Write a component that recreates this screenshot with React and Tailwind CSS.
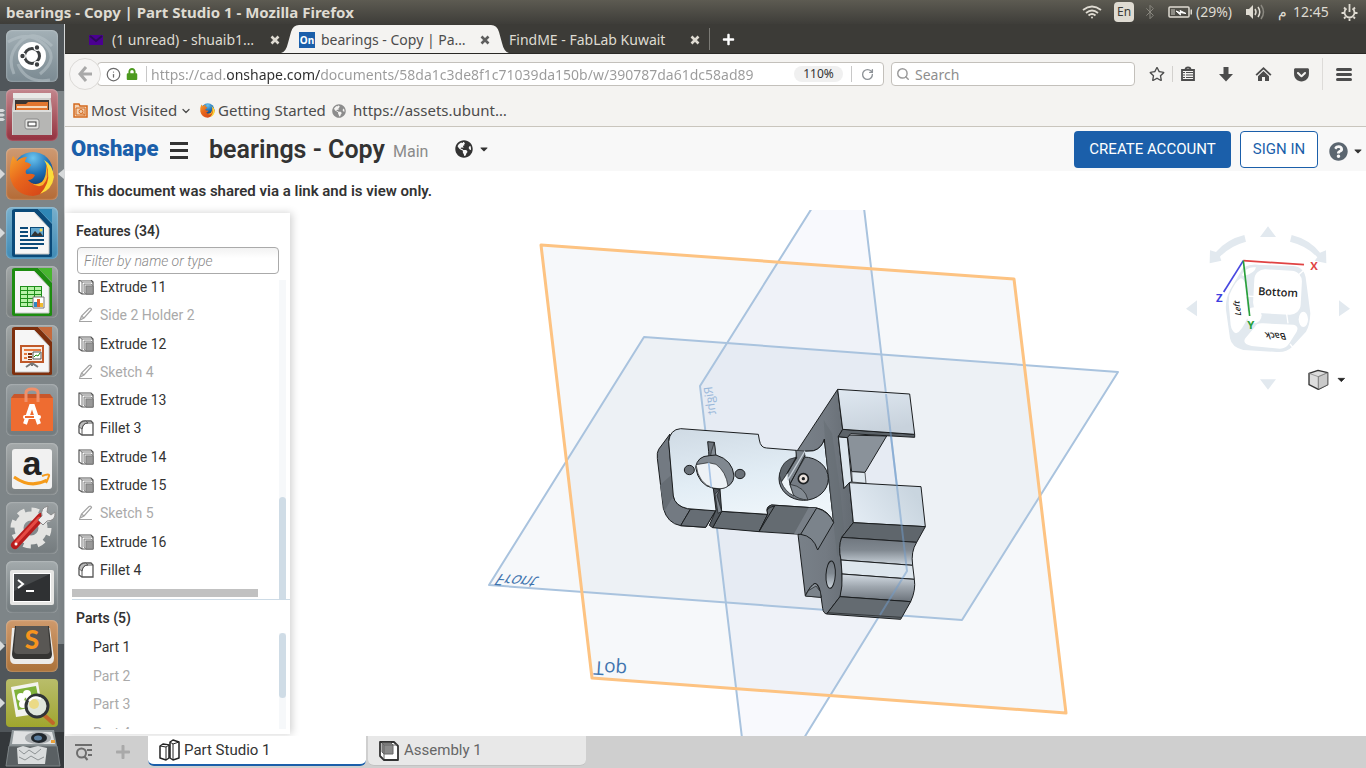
import React from "react";
import {
  FaGlobeAmericas,
  FaQuestionCircle,
  FaCaretDown,
  FaLock,
  FaRegStar,
  FaGetPocket,
  FaPlus,
} from "react-icons/fa";
import { Bluetooth, ChevronDown, Search, Info, RotateCw } from "lucide-react";

const features = [
  { name: "Extrude 11", type: "extrude" },
  { name: "Side 2 Holder 2", type: "sketch" },
  { name: "Extrude 12", type: "extrude" },
  { name: "Sketch 4", type: "sketch" },
  { name: "Extrude 13", type: "extrude" },
  { name: "Fillet 3", type: "fillet" },
  { name: "Extrude 14", type: "extrude" },
  { name: "Extrude 15", type: "extrude" },
  { name: "Sketch 5", type: "sketch" },
  { name: "Extrude 16", type: "extrude" },
  { name: "Fillet 4", type: "fillet" },
];

const parts = [
  { name: "Part 1", visible: true },
  { name: "Part 2", visible: false },
  { name: "Part 3", visible: false },
  { name: "Part 4", visible: false },
];

/* ---------- Top panel ---------- */

const TopPanel = () => (
  <header className="h-6 shrink-0 flex items-center justify-between pl-[6px] pr-2 bg-linear-to-b from-[#5d5b52] to-[#3e3d39] text-[#dfdbd2]">
    <h1 className="text-[15px] leading-6 font-bold font-['Noto_Sans',sans-serif] whitespace-nowrap">
      bearings - Copy | Part Studio 1 - Mozilla Firefox
    </h1>
    <div className="flex items-center text-sm font-['Noto_Sans',sans-serif]">
      <svg width="20" height="14" viewBox="0 0 20 14" fill="none" stroke="#dfdbd2" strokeWidth="1.8">
        <path d="M1 5Q10 -2 19 5" />
        <path d="M4 8Q10 3 16 8" />
        <path d="M6.500 10.500Q10 7.500 13.500 10.500" />
        <circle cx="10" cy="12.500" r="1" fill="#dfdbd2" stroke="none" />
      </svg>
      <span className="ml-3 w-5 h-5 rounded-sm bg-[#dfdbd2] text-[#3c3b37] text-xs leading-5 text-center">En</span>
      <Bluetooth size={16} strokeWidth={1.5} className="ml-2 text-[#8a8880]" />
      <svg className="ml-[10px]" width="25" height="12" viewBox="0 0 25 12">
        <rect x="1" y="1" width="20" height="10" rx="1" fill="none" stroke="#dfdbd2" strokeWidth="1.500" />
        <rect x="3" y="3" width="4" height="6" fill="#8d8b84" />
        <path d="M22.500 3.500h1.500v5h-1.500z" fill="#dfdbd2" />
        <path d="M8 5L13 7L12 4.500L18 7.500L12 6.500L12.500 9Z" fill="#fff" stroke="#fff" />
      </svg>
      <span className="ml-[3px] w-[39px]">(29%)</span>
      <svg className="ml-[11px]" width="20" height="16" viewBox="0 0 20 16">
        <path d="M0 5h3l4-4v14l-4-4H0z" fill="#dfdbd2" />
        <g fill="none" stroke="#dfdbd2" strokeWidth="1.500">
          <path d="M9 5q2 3 0 6" />
          <path d="M12 3q3.500 5 0 10" />
          <path d="M15 1q5 7 0 14" stroke="#8a8880" />
        </g>
      </svg>
      <span className="ml-3">م</span>
      <time className="ml-[6px] w-9">12:45</time>
      <svg className="ml-3" width="17" height="17" viewBox="0 0 17 17" fill="none" stroke="#dfdbd2" strokeWidth="1.800">
        <path d="M5.500 4.500a5 5 0 1 0 6 0" />
        <path d="M8.500 0v8" />
        <path d="M3 3.500l1.500 1.500M14 3.500L12.500 5M0.500 9H3M14 9h2.500M3 14.500l1.500-1.500M14 14.500L12.500 13M8.500 14.500V17" />
      </svg>
    </div>
  </header>
);

/* ---------- Launcher ---------- */

const PageSheet = ({ color, dark, children }) => (
  <svg width="52" height="52" viewBox="0 0 52 52">
    <path d="M9 2h23l14 15v32q0 1-2 1H8q-2 0-2-2V4q0-2 3-2z" fill={dark} />
    <path d="M32 2h14v14z" fill={color} />
    <path d="M9 5h19l15 16v26H9z" fill="#f6f6f6" />
    <path d="M28 5l15 16v26H9" fill="none" stroke="#c9c9c9" />
    {children}
  </svg>
);

const DashIcon = () => (
  <svg width="52" height="52" viewBox="0 0 52 52">
    <g fill="none" stroke="#b9c4c9" strokeWidth="3" opacity=".55">
      <path d="M2 12Q22 0 38 14T34 44" />
      <path d="M8 44Q0 26 14 12T46 16" />
      <path d="M44 50Q20 54 12 34" />
    </g>
    <circle cx="26" cy="26" r="14" fill="#fff" />
    <circle cx="26" cy="26" r="7.500" fill="none" stroke="#3c3f41" strokeWidth="3" />
    <g fill="#3c3f41" stroke="#fff" strokeWidth="1.200">
      <circle cx="16.500" cy="26" r="2.800" />
      <circle cx="31" cy="17.500" r="2.800" />
      <circle cx="31" cy="34.500" r="2.800" />
    </g>
  </svg>
);

const FilesIcon = () => (
  <svg width="52" height="52" viewBox="0 0 52 52">
    <path d="M8 4h36l2 16v26H6V20z" fill="#cfcfcd" />
    <path d="M7 4h38v5H7z" fill="#e9e9e7" />
    <path d="M9 11h34v11H9z" fill="#3d3633" />
    <path d="M10 15h10l2-2h20v9H10z" fill="#e2762f" />
    <path d="M11 17h30v2H11z" fill="#f5d9bd" />
    <path d="M7 21h38v25H7z" fill="#b6b6b4" />
    <path d="M7 21h38v2H7z" fill="#dddddb" />
    <rect x="19" y="30" width="14" height="10" rx="2" fill="#e4e4e2" stroke="#888" />
    <rect x="22" y="33" width="8" height="4" fill="#fff" stroke="#333" />
  </svg>
);

const FirefoxIcon = ({ size = 52 }) => (
  <svg width={size} height={size} viewBox="0 0 52 52">
    <defs>
      <radialGradient id="ffGlobe" cx="50%" cy="15%" r="80%">
        <stop offset="0" stopColor="#6bc4ee" />
        <stop offset=".5" stopColor="#1f70b5" />
        <stop offset="1" stopColor="#0d2c5e" />
      </radialGradient>
      <linearGradient id="ffFox" x1="0" y1="0" x2="1" y2="1">
        <stop offset="0" stopColor="#f7a32a" />
        <stop offset=".4" stopColor="#e8651c" />
        <stop offset="1" stopColor="#cf3d17" />
      </linearGradient>
    </defs>
    <circle cx="27" cy="24" r="20" fill="url(#ffGlobe)" />
    <path
      d="M7 8Q9 10 11 13Q15 9 21 9Q19 12 19 14Q24 15 25 17Q24 20 20 22Q19 25 21 26Q26 25 29 27Q27 32 22 32Q28 39 36 34Q42 28 40 17Q46 22 48 26Q46 45 27 48Q8 47 4 29Q3 17 7 8Z"
      fill="url(#ffFox)"
    />
    <path d="M38 12Q47 17 48 29Q46 42 34 46Q44 35 42 25Q42 18 38 12Z" fill="#fbdc3b" />
    <path d="M40 17Q41 28 36 34Q30 38 25 35Q32 40 37 37Q44 30 40 17Z" fill="#f8b62c" />
  </svg>
);

const WriterIcon = () => (
  <PageSheet color="#2f86b5" dark="#0b4a79">
    <g fill="#0b4a79">
      <path d="M14 20h8v2h-8zM14 24h8v2h-8zM14 28h8v2h-8zM14 32h24v2H14zM14 36h24v2H14zM14 40h18v2H14z" />
      <path d="M24 20h14v10H24z" />
    </g>
    <path d="M25 21h12v8H25z" fill="#63a8d0" />
    <path d="M25 29l4-5 3 3 2-2 3 4z" fill="#333" />
    <circle cx="35" cy="23" r="1.500" fill="#f3d44d" />
  </PageSheet>
);

const CalcIcon = () => (
  <PageSheet color="#47b52f" dark="#1d8c10">
    <path d="M14 20h22v21H14z" fill="#1f8f1b" />
    <g fill="#b7f2a8">
      <path d="M15 21h6v3h-6zM22 21h6v3h-6zM29 21h6v3h-6zM15 25h6v3h-6zM22 25h6v3h-6zM29 25h6v3h-6zM15 29h6v3h-6zM22 29h6v3h-6zM29 29h6v3h-6zM15 33h6v3h-6zM22 33h6v3h-6zM15 37h6v3h-6zM22 37h6v3h-6z" />
    </g>
    <path d="M27 31h11v11H27z" fill="#fff" stroke="#777" />
    <path d="M28 36h3v5h-3z" fill="#2f86c5" />
    <path d="M31 33h3v8h-3z" fill="#e4632a" />
    <path d="M34 37h3v4h-3z" fill="#f0bd32" />
  </PageSheet>
);

const ImpressIcon = () => (
  <PageSheet color="#c56a3c" dark="#7e2f0d">
    <path d="M15 21h22v16H15z" fill="#f9ede5" stroke="#c0592a" strokeWidth="2" />
    <path d="M18 24h17v2H18z" fill="#e77a3d" />
    <path d="M18 28h3v2h-3zM18 32h3v2h-3z" fill="#e77a3d" />
    <path d="M22 28h4v2h-4zM22 31h4v2h-4zM22 34h4v1h-4z" fill="#7e2f0d" />
    <path d="M27 27h8v7h-8z" fill="#fff" stroke="#555" />
    <path d="M28 32l2-2 2 1 2-3" fill="none" stroke="#1d8c10" />
    <path d="M26 38l-6 4M26 38l6 4M26 38v3" stroke="#777" strokeWidth="2" />
  </PageSheet>
);

const SoftwareIcon = () => (
  <svg width="52" height="52" viewBox="0 0 52 52">
    <path d="M5 14h42v33H5z" fill="#ee6c31" />
    <path d="M8 10h36l3 4H5z" fill="#c9562a" />
    <path d="M20 18V9q0-4 6-4t6 4v9" fill="none" stroke="#f0906a" strokeWidth="3" />
    <g stroke="#fff" strokeWidth="4" fill="none">
      <path d="M19 40L25 22h2l6 18" />
    </g>
    <rect x="17" y="31" width="18" height="4" rx="2" fill="#fff" />
    <path d="M19 33h9" stroke="#ee6c31" strokeWidth="2" />
  </svg>
);

const AmazonIcon = () => (
  <svg width="52" height="52" viewBox="0 0 52 52">
    <rect x="6" y="6" width="40" height="40" rx="3" fill="#f1f1f1" />
    <text x="26" y="32" textAnchor="middle" fontFamily="Liberation Sans, sans-serif" fontWeight="700" fontSize="34" fill="#222">
      a
    </text>
    <path d="M8 34Q25 46 41 37" fill="none" stroke="#f59b1b" strokeWidth="3" />
    <path d="M36 33q8-3 7 0t-3 7" fill="none" stroke="#f59b1b" strokeWidth="2" />
  </svg>
);

const SettingsIcon = () => (
  <svg width="52" height="52" viewBox="0 0 52 52">
    <circle cx="25" cy="26" r="17" fill="none" stroke="#e4e4e2" strokeWidth="7" strokeDasharray="7 6.350" />
    <circle cx="25" cy="26" r="12" fill="none" stroke="#e4e4e2" strokeWidth="9" />
    <path d="M9 43L35 15" stroke="#b81d1d" strokeWidth="8" strokeLinecap="round" />
    <path d="M10 41L33 16" stroke="#e54a43" strokeWidth="3" strokeLinecap="round" />
    <path d="M32 18l4-4q-2-8 6-10l-1 6 4 3 4-3q1 9-8 9l-4 4z" fill="#ececec" stroke="#8a8a8a" />
    <circle cx="10" cy="42" r="1.500" fill="#fff" />
  </svg>
);

const TerminalIcon = () => (
  <svg width="52" height="52" viewBox="0 0 52 52">
    <rect x="4" y="9" width="44" height="35" rx="2" fill="#e6e6e4" />
    <rect x="7" y="12" width="38" height="29" fill="#fff" />
    <rect x="8" y="13" width="36" height="27" fill="#2f3133" />
    <path d="M8 13h36L8 30z" fill="#46494b" />
    <path d="M12 19l5 4-5 4" fill="none" stroke="#fff" strokeWidth="2" />
    <path d="M20 30h8" stroke="#fff" strokeWidth="2" />
  </svg>
);

const SublimeIcon = () => (
  <svg width="52" height="52" viewBox="0 0 52 52">
    <path d="M6 8h38l4 30q0 6-5 6H9q-5 0-5-6z" fill="#ecebe8" />
    <path d="M9 6h34l3 28q0 5-4 5H10q-4 0-4-5z" fill="#353432" />
    <path d="M10 6h32l2 24q0 4-4 4H12q-4 0-4-4z" fill="#595754" />
    <text x="26" y="29" textAnchor="middle" fontFamily="Lato, sans-serif" fontWeight="900" fontSize="26" fill="#f7941e">
      S
    </text>
  </svg>
);

const ViewerIcon = () => (
  <svg width="52" height="48" viewBox="0 0 52 48">
    <path d="M5 8l27-5 5 31-27 4z" fill="#f3f3ee" />
    <path d="M8 11l22-4 4 20-22 4z" fill="#7fb23a" />
    <g fill="#fff">
      <circle cx="15" cy="18" r="4" />
      <circle cx="21" cy="15" r="4" />
      <circle cx="24" cy="21" r="4" />
      <circle cx="17" cy="25" r="4" />
    </g>
    <path d="M38 36l9 8" stroke="#c1672a" strokeWidth="4" strokeLinecap="round" />
    <circle cx="31" cy="27" r="11" fill="#dfe6dc" stroke="#2f3436" strokeWidth="3" />
    <circle cx="28" cy="25" r="5" fill="#f3d24c" opacity=".6" />
    <path d="M23 22q5-6 12-2" stroke="#fff" strokeWidth="2" fill="none" />
  </svg>
);

const launcherApps = [
  { name: "Dash", icon: <DashIcon />, tile: "bg-linear-to-b from-[#a3b0b6] to-[#7b8a92]" },
  { name: "Files", icon: <FilesIcon />, tile: "bg-linear-to-b from-[#c2868d] to-[#93303f]", marks: "stack" },
  { name: "Firefox", icon: <FirefoxIcon />, tile: "bg-linear-to-b from-[#cf9a72] to-[#b46b36]", marks: "focused" },
  { name: "LibreOffice Writer", icon: <WriterIcon />, tile: "bg-linear-to-b from-[#79b0cc] to-[#3e8ab5]", marks: "open" },
  { name: "LibreOffice Calc", icon: <CalcIcon />, tile: "bg-linear-to-b from-[#a1a6a6] to-[#777d7d]" },
  { name: "LibreOffice Impress", icon: <ImpressIcon />, tile: "bg-linear-to-b from-[#a1a6a6] to-[#777d7d]" },
  { name: "Ubuntu Software", icon: <SoftwareIcon />, tile: "bg-linear-to-b from-[#969da0] to-[#727a7d]" },
  { name: "Amazon", icon: <AmazonIcon />, tile: "bg-linear-to-b from-[#a3a8a9] to-[#7a8082]" },
  { name: "System Settings", icon: <SettingsIcon />, tile: "bg-linear-to-b from-[#9aa0a2] to-[#747b7e]" },
  { name: "Terminal", icon: <TerminalIcon />, tile: "bg-linear-to-b from-[#a3aaac] to-[#727a7d]" },
  { name: "Sublime Text", icon: <SublimeIcon />, tile: "bg-linear-to-b from-[#cf9a6c] to-[#ab7239]", marks: "open" },
];

const Marks = ({ kind }) => (
  <span className="absolute inset-0 flex items-center justify-between pointer-events-none">
    {kind === "stack" ? (
      <svg width="5" height="14" viewBox="0 0 5 14" fill="#d7dadb">
        <path d="M0 1h3l2 1.500L3 4H0zM0 5.500h3L5 7 3 8.500H0zM0 10h3l2 1.500L3 13H0z" />
      </svg>
    ) : (
      <svg width="5" height="10" viewBox="0 0 5 10" fill="#d7dadb">
        <path d="M0 0l5 5-5 5z" />
      </svg>
    )}
    {kind === "focused" && (
      <svg width="6" height="10" viewBox="0 0 6 10" fill="#d7dadb">
        <path d="M6 0L0 5l6 5z" />
      </svg>
    )}
  </span>
);

const Launcher = () => (
  <nav
    aria-label="Launcher"
    className="w-[65px] shrink-0 overflow-hidden flex flex-col gap-[7px] pt-[6px] border-r border-[#d5d7d8] bg-[linear-gradient(#50565a_67px,#7e8588_67px,#7e8588_620px,#50565a_620px,#50565a_708px,#34383b_708px)]"
  >
    {launcherApps.map((app) => (
      <div key={app.name} className="relative shrink-0 px-[6px]">
        <button
          aria-label={app.name}
          className={`block w-[52px] h-[52px] rounded-md shadow-[inset_0_0_2px_#ffffff90] ${app.tile}`}
        >
          {app.icon}
        </button>
        {app.marks && <Marks kind={app.marks} />}
      </div>
    ))}
    <div className="relative shrink-0 px-[6px]">
      <button aria-label="Image Viewer" className="block w-[52px] h-[48px] rounded-sm bg-linear-to-b from-[#b9bd6a] to-[#a0a62c]">
        <ViewerIcon />
      </button>
      <Marks kind="open" />
    </div>
    <button aria-label="More applications" className="shrink-0 px-1 -mt-[5px]">
      <svg width="58" height="44" viewBox="0 0 58 44">
        <path d="M8 1h42l4 22H4z" fill="#8f979a" />
        <path d="M10 2l38 1 3 12H8z" fill="#dfe1e2" />
        <ellipse cx="34" cy="9" rx="13" ry="6" fill="#a9adb0" />
        <ellipse cx="35" cy="9" rx="8" ry="5" fill="#20262c" />
        <ellipse cx="34" cy="9" rx="4" ry="2.500" fill="#5a7ea0" />
        <path d="M47 11h4v3h-4z" fill="#e9a13a" />
        <path d="M5 17h48l3 20H2z" fill="#5a6063" stroke="#7d8487" />
        <path d="M13 19l6-2 7 2 8-2 9 2-2 16H14z" fill="#d9dcdd" />
        <path d="M15 21l5 4 5-4 6 4 6-5M15 28l6 3 6-4 7 4 6-3" fill="none" stroke="#8d9294" />
      </svg>
    </button>
  </nav>
);

/* ---------- Browser chrome ---------- */

const CloseTab = ({ className }) => (
  <button aria-label="Close tab" className={`w-[10px] ${className}`}>
    <svg width="10" height="10" viewBox="0 0 10 10" stroke="currentColor" strokeWidth="2.600">
      <path d="M1.500 1.500l7 7M8.500 1.500l-7 7" />
    </svg>
  </button>
);

const TabStrip = () => (
  <div className="h-[30px] shrink-0 flex items-end pl-6 bg-[#3c3b37] border-b border-[#2a2926] text-sm font-['Noto_Sans',sans-serif] text-[#dfdbd2] whitespace-nowrap">
    <div className="w-[192px] h-7 pt-[2px] flex items-center">
      <svg width="14" height="10" viewBox="0 0 14 10">
        <path d="M0 0h14v10H0z" fill="#4b0091" />
        <path d="M1 1l6 5 6-5" fill="none" stroke="#2c0a57" strokeWidth="2" />
      </svg>
      <button className="ml-[9px] w-[158px] text-left">(1 unread) - shuaib1…</button>
      <CloseTab className="text-[#dfdbd2]" />
    </div>
    <svg className="shrink-0 self-end" width="18" height="28" viewBox="0 0 18 28">
      <path d="M0 28Q5 27 7 18L10 7Q12 0 18 0V28Z" fill="#f4f3f1" />
    </svg>
    <div className="w-[192px] h-7 pt-[2px] flex items-center bg-[#f4f3f1] text-[#4c4c4c]">
      <span className="w-4 h-4 bg-[#1b5faa] text-white text-[10px] leading-4 font-bold text-center">On</span>
      <button className="ml-[6px] w-[159px] text-left">bearings - Copy | Pa…</button>
      <CloseTab className="text-[#5e5e5e]" />
    </div>
    <svg className="shrink-0 self-end" width="18" height="28" viewBox="0 0 18 28">
      <path d="M18 28Q13 27 11 18L8 7Q6 0 0 0V28Z" fill="#f4f3f1" />
    </svg>
    <div className="w-[200px] h-7 pt-[2px] flex items-center">
      <button className="w-[181px] text-left">FindME - FabLab Kuwait</button>
      <CloseTab className="text-[#dfdbd2]" />
    </div>
    <span className="w-px h-[22px] self-center bg-[#7b7a75]" />
    <button aria-label="New tab" className="h-7 px-3 text-white">
      <FaPlus size={13} />
    </button>
  </div>
);

const NavBar = () => (
  <div className="h-10 shrink-0 flex items-center pl-1 pr-[14px] text-sm font-['Noto_Sans',sans-serif] text-[#4c4c4c]">
    <button aria-label="Back" className="z-10 w-8 h-8 shrink-0 rounded-full border border-[#dcdad7] bg-[#f6f5f4] flex items-center justify-center">
      <svg width="14" height="16" viewBox="0 0 14 16" fill="none" stroke="#a9a9a9" strokeWidth="3">
        <path d="M8 1L2 8l6 7M2 8h12" />
      </svg>
    </button>
    <div className="-ml-1 flex-1 h-6 flex items-center pl-2 bg-white border border-[#c3c0bb] rounded-sm">
      <Info size={15} strokeWidth={2} className="shrink-0 text-[#6b6b6b]" />
      <FaLock size={12} className="ml-[5px] shrink-0 text-[#4d9a1f]" />
      <span className="ml-2 w-px h-4 shrink-0 bg-[#c8c8c8]" />
      <input
        aria-label="Address"
        readOnly
        value="https://cad.onshape.com/documents/58da1c3de8f1c71039da150b/w/390787da61dc58ad89"
        className="ml-1 h-[22px] pt-px flex-1 min-w-0 bg-clip-text text-transparent bg-[linear-gradient(to_right,#9a9a9a_76px,#2e2e2e_76px,#2e2e2e_169px,#9a9a9a_169px)] outline-none"
      />
      <button className="ml-[22px] w-[49px] h-4 shrink-0 rounded-full bg-[#f0f0f0] text-xs leading-4 text-[#333]">110%</button>
      <span className="ml-2 w-px h-4 shrink-0 bg-[#c8c8c8]" />
      <button aria-label="Reload" className="mx-[9px] text-[#8d9297]">
        <RotateCw size={13} strokeWidth={2.500} />
      </button>
    </div>
    <label className="ml-[7px] w-[244px] h-6 flex items-center gap-[5px] pl-1 bg-white border border-[#c3c0bb] rounded-sm">
      <Search size={14} strokeWidth={2.500} className="text-[#9a9a9a]" />
      <input aria-label="Search" placeholder="Search" className="w-[200px] h-[22px] pt-px placeholder-[#8e8e8e] outline-none" />
    </label>
    <button aria-label="Bookmark this page" className="ml-[14px]">
      <FaRegStar size={16} />
    </button>
    <span className="ml-[7px] w-px h-4 bg-[#d3d1ce]" />
    <button aria-label="Show bookmarks" className="ml-[7px]">
      <svg width="16" height="16" viewBox="0 0 16 16" fill="none" stroke="#4c4c4c" strokeWidth="1.800">
        <path d="M2 4h12v10H2zM5.500 3.500q0-2 2.500-2t2.500 2" />
        <path d="M3 6.500h2M3 9h2M3 11.500h2M6 6.500h7M6 9h7M6 11.500h7" strokeWidth="1" />
      </svg>
    </button>
    <button aria-label="Downloads" className="ml-[22px]">
      <svg width="16" height="16" viewBox="0 0 16 16" fill="#4c4c4c">
        <path d="M5.500 1h5v7H15l-7 7.500L1 8h4.500z" />
      </svg>
    </button>
    <button aria-label="Home" className="ml-[21px]">
      <svg width="17" height="16" viewBox="0 0 17 16" fill="#4c4c4c">
        <path d="M8.500 1L0.500 8.500l1.300 1.300L8.500 3.500l6.700 6.300 1.300-1.300z" />
        <path d="M8.500 5L3 10.200V15h4v-4h3v4h4v-4.800z" />
      </svg>
    </button>
    <button aria-label="Pocket" className="ml-[21px]">
      <FaGetPocket size={17} />
    </button>
    <span className="ml-3 w-px h-8 bg-[#dddbd8]" />
    <button aria-label="Open menu" className="ml-[13px] w-4 flex flex-col gap-[2px]">
      <span className="h-[3px] rounded-sm bg-[#4c4c4c]" />
      <span className="h-[3px] rounded-sm bg-[#4c4c4c]" />
      <span className="h-[3px] rounded-sm bg-[#4c4c4c]" />
    </button>
  </div>
);

const BookmarksBar = () => (
  <div className="h-[33px] shrink-0 flex items-center pl-2 pt-px border-b border-[#c9c5bd] text-[15px] font-['Noto_Sans',sans-serif] text-[#4c4c4c] whitespace-nowrap">
    <button className="flex items-center gap-[3px] w-[126px]">
      <svg className="shrink-0" width="15" height="15" viewBox="0 0 15 15" fill="none" stroke="#d4691e">
        <path d="M1 14V1h5l1 2h7v11z" strokeWidth="1.500" fill="#f3d3b5" />
        <path d="M3 5h9v7H3z" />
        <circle cx="8" cy="8.500" r="2" />
        <path d="M9.500 10l2.500 2.500" />
      </svg>
      Most Visited
      <ChevronDown size={12} strokeWidth={2.500} className="shrink-0" />
    </button>
    <a href="#getting-started" className="flex items-center gap-[2px] w-[133px]">
      <FirefoxIcon size={17} />
      Getting Started
    </a>
    <a href="#assets" className="flex items-center gap-[7px]">
      <FaGlobeAmericas size={14} className="text-[#8c8c8c]" />
      https://assets.ubunt…
    </a>
  </div>
);

/* ---------- Onshape ---------- */

const DocumentHeader = () => (
  <div className="h-11 shrink-0 flex items-center pl-[6px] pr-[2px] bg-[#f8f8f8]">
    <a href="#home" className="w-[87px] shrink-0 text-[22px] font-black text-[#1b5faa] leading-6">
      Onshape
    </a>
    <button aria-label="Document menu" className="ml-3 mt-[2px] w-[18px] shrink-0 flex flex-col gap-1">
      <span className="h-[3px] bg-[#333]" />
      <span className="h-[3px] bg-[#333]" />
      <span className="h-[3px] bg-[#333]" />
    </button>
    <h2 className="ml-[21px] mt-[2px] w-[176px] shrink-0 text-[25px] leading-8 font-semibold whitespace-nowrap">bearings - Copy</h2>
    <span className="ml-2 mt-[6px] text-base leading-6 text-[#8a8a8a]">Main</span>
    <button aria-label="Public document" className="ml-[27px] flex items-center gap-[5px]">
      <FaGlobeAmericas size={18} />
      <FaCaretDown size={12} />
    </button>
    <button className="ml-auto h-[37px] w-[157px] rounded-sm bg-[#1b5faa] text-[15px] text-white">CREATE ACCOUNT</button>
    <button className="ml-[9px] h-[37px] w-[78px] rounded-sm border border-[#1b5faa] bg-white text-[15px] text-[#1b5faa]">
      SIGN IN
    </button>
    <button aria-label="Help" className="ml-[11px] flex items-center gap-1 mt-1">
      <FaQuestionCircle size={19} className="text-[#5b6670]" />
      <FaCaretDown size={12} />
    </button>
  </div>
);

const FeatureIcon = ({ type }) => {
  if (type === "sketch") {
    return (
      <svg width="16" height="16" viewBox="0 0 16 16" fill="none" stroke="#a3a3a3" strokeWidth="1.200">
        <path d="M2 13l1.500-4L11 1.500q2-1 2.500 1L6 11l-4 2zM3.500 9l2.500 2M1 14.500h13" />
      </svg>
    );
  }
  if (type === "fillet") {
    return (
      <svg width="16" height="16" viewBox="0 0 16 16" fill="none" stroke="#555" strokeWidth="1.300">
        <path d="M1 6Q2 1 7 1h6l2 2v12H4l-3-2z" fill="#fff" />
        <path d="M1 7Q2 1 8 1l2 2Q5 3 4 9z" fill="#bbb" strokeWidth=".8" />
        <path d="M4 15V9Q5 3 10 3h5" strokeWidth="1" />
      </svg>
    );
  }
  return (
    <svg width="16" height="16" viewBox="0 0 16 16" fill="none" stroke="#555" strokeWidth="1.200">
      <path d="M1 1h12l2 2v12H4l-3-2z" fill="#fff" />
      <path d="M4 15V3h11M1 1l3 2" strokeWidth=".8" />
      <path d="M6 5h7l2 2v8H8l-2-2z" fill="#d2d2d2" stroke="#777" strokeWidth=".8" />
      <path d="M8 7h7v8H8z" fill="#999" stroke="#777" strokeWidth=".8" />
    </svg>
  );
};

const FeaturePanel = () => (
  <aside className="w-[225px] mt-[3px] mb-[2px] shrink-0 z-10 flex flex-col bg-white shadow-[2px_0_8px_#00000030] text-sm">
    <h3 className="ml-[11px] mt-[9px] h-[18px] leading-[18px] font-semibold">Features (34)</h3>
    <label className="mt-[7px] ml-3 mr-[11px] h-[27px] flex items-center px-[6px] rounded border border-[#aaa] bg-linear-to-b from-[#f2f2f2] to-white to-40%">
      <input
        aria-label="Filter by name or type"
        placeholder="Filter by name or type"
        className="w-full pt-px italic font-light placeholder-[#888] outline-none"
      />
    </label>
    <div className="mt-[6px] h-[320px] shrink-0 ml-[7px] flex justify-between overflow-hidden border-b border-[#cddbe6]">
      <div className="w-[186px]">
        <ul className="h-[311px] -mt-[7px] pl-[6px] grid auto-rows-fr">
          {features.map((feature) => (
            <li key={feature.name} className={`flex items-center gap-[6px] ${feature.type === "sketch" ? "text-[#aaa]" : ""}`}>
              <FeatureIcon type={feature.type} />
              {feature.name}
            </li>
          ))}
        </ul>
        <div className="mt-[5px] h-2 bg-[#c1c1c1]" />
      </div>
      <div className="w-[7px] mr-1 flex flex-col justify-end bg-[#f6f8fa]">
        <div className="h-[102px] rounded-t-sm bg-[#cfdce6]" />
      </div>
    </div>
    <h3 className="ml-[11px] mt-[9px] h-[18px] leading-[18px] font-semibold shrink-0">Parts (5)</h3>
    <div className="mt-[6px] mb-[5px] min-h-0 flex-1 flex justify-between overflow-hidden">
      <ul className="h-[114px] ml-7 grid auto-rows-fr">
        {parts.map((part) => (
          <li key={part.name} className={`flex items-center ${part.visible ? "" : "text-[#aaa]"}`}>
            {part.name}
          </li>
        ))}
      </ul>
      <div className="w-[7px] mr-1 bg-[#f6f8fa]">
        <div className="h-[65px] rounded-sm bg-[#cfdce6]" />
      </div>
    </div>
  </aside>
);

/* The bearing bracket, drawn in its own 930x810 space */
const Bracket = () => (
  <svg x="640" y="370" width="310" height="270" viewBox="0 0 930 810">
    <defs>
      <linearGradient id="face" x1="0" y1="0" x2=".3" y2="1">
        <stop offset="0" stopColor="#cfdae4" />
        <stop offset=".6" stopColor="#e2edf5" />
        <stop offset="1" stopColor="#eef5fa" />
      </linearGradient>
      <linearGradient id="boxFace" x1="0" y1="1" x2="1" y2=".6">
        <stop offset="0" stopColor="#e6eef6" />
        <stop offset="1" stopColor="#c9d5df" />
      </linearGradient>
      <linearGradient id="boxTop" x1="0" y1="0" x2=".3" y2="1">
        <stop offset="0" stopColor="#dfe8f1" />
        <stop offset="1" stopColor="#c8d2dc" />
      </linearGradient>
      <linearGradient id="groove" x1="0" y1="0" x2="0" y2="1">
        <stop offset="0" stopColor="#6f767e" />
        <stop offset=".45" stopColor="#808890" />
        <stop offset="1" stopColor="#cdd6de" />
      </linearGradient>
      <linearGradient id="round" x1="0" y1="0" x2="0" y2="1">
        <stop offset="0" stopColor="#d5dde5" />
        <stop offset=".45" stopColor="#a0a8b0" />
        <stop offset="1" stopColor="#6b727a" />
      </linearGradient>
      <linearGradient id="body" x1="0" y1="0" x2="1" y2="0">
        <stop offset="0" stopColor="#7b838b" />
        <stop offset=".6" stopColor="#737a82" />
        <stop offset="1" stopColor="#646b72" />
      </linearGradient>
    </defs>
    <g stroke="#1b1e20" strokeWidth="3" strokeLinejoin="round">
      {/* plate sides */}
      <path d="M90 192L56 238Q50 248 52 265L70 415Q82 460 122 467L197 472L228 420L143 416Q105 408 100 378L86 210Z" fill="#737a82" />
      <path d="M60 345L94 315L100 378L73 424Z" fill="#666d74" stroke="none" />
      <path d="M151 418L122 467" />
      <path d="M122 467L197 472L228 420L151 418Z" fill="#666d74" />
      <path d="M245 424L218 473L357 485L383 433Z" fill="#646b71" />
      {/* plate face */}
      <path
        d="M86 215Q90 178 122 176L355 193L358 210Q362 234 380 234L468 241L470 262L495 243L520 242Q545 235 553 207L581 458Q565 420 530 414L395 405Q381 408 381 420L383 433L245 424L143 416Q105 408 100 378Z"
        fill="url(#face)"
      />
      <path d="M203 215L223 217L228 262L208 280L206 245Z" fill="#6b727a" />
      <path d="M223 217L214 245L208 280L228 262Z" fill="#858d95" strokeWidth="2" />
      {/* bore */}
      <path d="M167 292Q172 258 208 257L228 255Q278 270 282 318Q280 350 240 357L220 355Q175 345 167 292Z" fill="#808890" />
      <path d="M168 284L205 278L228 283Q258 305 264 348Q250 360 220 354Q175 342 168 284Z" fill="#edf2f6" strokeWidth="2" />
      <path d="M206 278L214 352" stroke="#a9c5e6" strokeWidth="5" />
      <path d="M220 355L240 358L245 424L218 473L208 466L228 420Z" fill="#50565c" />
      <path d="M240 358L231 376L245 424L234 430L225 372Z" fill="#808890" strokeWidth="2" />
      <ellipse cx="148" cy="300" rx="15" ry="14" fill="#6a7178" />
      <ellipse cx="300" cy="312" rx="15" ry="14" fill="#6a7178" />
      {/* arm below the plate */}
      <path d="M395 405L530 414L482 493L357 485L383 433L381 420Q383 408 395 405Z" fill="#646b71" />
      <path d="M506 413L530 414L482 493L462 491Z" fill="#787f87" stroke="none" />
      <path d="M381 420Q388 410 404 408L357 485" fill="none" />
      <path
        d="M593 58L608 178L595 200L612 355L628 338L640 458L605 502Q594 530 603 570L608 640Q605 670 600 680L560 732Q550 730 548 715L541 665Q535 640 525 640Q512 645 496 678L474 493L482 493L581 458L553 207Q545 235 520 242L495 243L442 328L438 312L468 262L470 245Z"
        fill="url(#body)"
      />
      <path d="M551 150L576 190L600 360L612 480L592 560L560 280Z" fill="#646b72" stroke="none" opacity=".5" />
      <path d="M530 414Q567 425 581 458L533 540Q520 498 482 493Z" fill="#7b838b" />
      {/* bearing seat */}
      <ellipse cx="491" cy="326" rx="74" ry="65" fill="#757c84" />
      <path d="M418 315Q425 268 468 262L440 312L424 336Z" fill="#5f666d" strokeWidth="2" />
      <path d="M424 336L446 304L450 345L462 378Q435 365 424 336Z" fill="#eef4f8" strokeWidth="2" />
      <path d="M450 343Q495 350 504 390Q474 388 460 374Z" fill="#828a92" strokeWidth="2" />
      <path d="M468 241L470 264L442 310L450 340L495 262L493 243Z" fill="#7c848c" strokeWidth="2" />
      <path d="M442 310L444 328L495 243" fill="none" stroke="#c4cdd5" strokeWidth="4" />
      <path d="M440 312L470 262M450 343L495 256" fill="none" />
      <circle cx="490" cy="326" r="15" fill="#e9e1dc" strokeWidth="5" />
      <circle cx="490" cy="326" r="5" fill="#1b1e20" stroke="none" />
      {/* upper jaw */}
      <path d="M622 195L740 198L675 307L635 305Z" fill="#8a929a" />
      <path d="M635 305L675 308L678 340L637 336Z" fill="#dfe8ef" strokeWidth="2" />
      <path d="M595 200L622 203L635 335L628 338L612 355Z" fill="#dce6ee" />
      <path d="M608 178L824 193L824 202L632 191L622 203L595 200Z" fill="#5c6369" />
      <path d="M593 58L809 72L824 193L608 178Z" fill="url(#boxTop)" />
      {/* lower jaw */}
      <path d="M628 338L843 350L856 470L640 458Z" fill="url(#boxFace)" />
      <path d="M640 458L856 470L830 517L605 502Z" fill="#5f666c" />
      <path d="M605 502L830 517Q812 545 818 586L603 570Q594 530 605 502Z" fill="url(#groove)" />
      <path d="M603 570L818 586L823 628L606 612Z" fill="#dde6ed" />
      <path d="M606 612L823 628Q828 660 812 695L600 680Q608 650 606 612Z" fill="url(#round)" />
      <path d="M600 680L812 695L782 748L560 732Z" fill="#646b71" />
      <path d="M562 728L784 742" fill="none" strokeWidth="2" />
      <ellipse cx="572" cy="614" rx="14" ry="41" fill="url(#groove)" transform="rotate(3 572 614)" />
      <path d="M496 678Q512 645 525 640Q537 642 543 682Z" fill="#8a929a" />
      <path d="M505 662L528 648L541 665L543 682L496 678Z" fill="#7b838b" strokeWidth="2" />
    </g>
  </svg>
);

const ModelView = () => (
  <svg className="w-full h-full" viewBox="290 210 1076 526" preserveAspectRatio="xMidYMid slice" role="img" aria-label="3D model">
    <g fill="#5f88a8" fillOpacity=".06">
      <path d="M644 337L1118 372L962 620L489 585Z" />
      <path d="M541 245L1014 279L1066 713L592 678Z" />
      <path d="M700 386L812 208L864 208L907 571L804 738L742 738Z" fill="#4f6cc0" fillOpacity=".04" />
    </g>
    <g fill="none" stroke="#a9c3de" strokeWidth="2" strokeLinejoin="round">
      <path d="M644 337L1118 372L962 620L489 585Z" />
      <path d="M812 208L700 386L742 738M864 208L907 571L804 738" />
    </g>
    <path d="M541 245L1014 279L1066 713L592 678Z" fill="none" stroke="#fdc382" strokeWidth="3" strokeLinejoin="round" />
    <g fill="#3f74ae" fontFamily="Open Sans, sans-serif">
      <text transform="translate(594 661) rotate(4) scale(1 -1)" fontSize="19">
        Top
      </text>
      <text transform="translate(500 574) rotate(4) skewX(-30) scale(1 -1)" fontSize="16">
        Front
      </text>
      <text transform="translate(712 386) rotate(82) scale(1 -1)" fontSize="12" fill="#9ab8da">
        Right
      </text>
    </g>
    <Bracket />
    <path d="M886 394L907 571L880 615" fill="none" stroke="#6f9bcc" strokeWidth="2" opacity=".5" />
  </svg>
);

/* Orientation cube with its rotate arrows */
const ViewCube = () => (
  <svg width="186" height="190" viewBox="0 0 558 570" role="img" aria-label="View cube">
    <g fill="#e2e9ef">
      <path d="M264 49L288 81H240ZM264 539L240 508H288ZM18 296L51 271V319ZM510 296L477 271V319Z" />
      <path d="M193 75Q140 88 108 126L90 121L89 160L124 152L120 140Q150 108 198 95Z" />
      <path d="M335 75Q388 88 420 128L438 121L439 160L404 152L412 142Q382 108 330 95Z" />
      <path d="M190 172Q215 160 240 165L340 168Q375 172 378 210L391 310Q390 345 378 365L335 412Q320 428 290 426L190 420Q155 412 150 385L138 300Q135 270 150 240Z" />
    </g>
    <g fill="#fff">
      <rect x="221" y="180" width="143" height="132" rx="32" transform="rotate(3 292 246)" />
      <path d="M225 350Q230 338 250 340L340 344Q358 348 350 365L328 400Q318 416 300 416L215 408Q185 402 196 385Z" />
      <path d="M148 255Q165 215 182 205Q194 205 196 230L204 320Q185 365 168 370Q155 365 152 345L146 280Z" />
      <ellipse cx="222" cy="316" rx="23" ry="24" />
      <ellipse cx="370" cy="328" rx="14" ry="23" />
      <path d="M185 195Q200 168 228 172Q225 190 190 198Z" />
    </g>
    <path d="M355 195L372 180M198 258L228 260M320 312L324 340M330 402L345 420" stroke="#fff" strokeWidth="4" />
    <g fill="#222" fontFamily="Open Sans, sans-serif" fontWeight="600">
      <text x="294" y="258" textAnchor="middle" fontSize="33" transform="rotate(3 294 246)">
        Bottom
      </text>
      <text transform="translate(315 370) rotate(183) skewX(20)" fontSize="27">
        Back
      </text>
      <text transform="translate(184 318) rotate(-98) skewX(-20)" fontSize="24">
        Left
      </text>
    </g>
    <g strokeWidth="5" fontFamily="Open Sans, sans-serif" fontWeight="700" fontSize="34">
      <path d="M190 152L372 164" stroke="#e04343" />
      <path d="M190 152L131 246" stroke="#4848e0" />
      <path d="M190 152L209 318" stroke="#28a03a" />
      <text x="391" y="179" fill="#e04343">X</text>
      <text x="108" y="276" fill="#3f3fe0">Z</text>
      <text x="202" y="358" fill="#28a03a">Y</text>
    </g>
    <g stroke="#333" strokeWidth="4" strokeLinejoin="round">
      <path d="M387 490L414 481L443 488V524L415 538L387 524Z" fill="#ddd" />
      <path d="M415 500L443 488V524L415 538Z" fill="#c9c9c9" strokeWidth="1" />
      <path d="M387 490L415 500L443 488M415 500V538" fill="none" stroke="#777" strokeWidth="2" />
      <path d="M474 505H494L484 515Z" fill="#222" stroke="#222" strokeWidth="2" />
    </g>
  </svg>
);

const DocumentTabs = () => (
  <footer className="h-8 shrink-0 flex items-start gap-[2px] bg-[#cfcfcf] text-[15px] z-10">
    <div className="w-[81px] h-8 flex items-center pl-[10px] gap-[22px]">
      <button aria-label="Find tab">
        <svg width="18" height="18" viewBox="0 0 18 18" fill="none" stroke="#6d6d6d" strokeWidth="2">
          <path d="M0 2h17M12 7h5M13 12h4" />
          <circle cx="6.500" cy="10" r="4.500" />
          <path d="M9.500 13.500l3 3.500" />
        </svg>
      </button>
      <button aria-label="Add tab" className="text-[#a9a9a9]">
        <FaPlus size={16} />
      </button>
    </div>
    <button className="w-[218px] h-[30px] flex items-center gap-1 pl-[11px] bg-white border-b-2 border-[#1b5faa] rounded-b-md">
      <svg width="21" height="22" viewBox="0 0 21 22" fill="#fff" stroke="#222" strokeWidth="1.500" strokeLinejoin="round">
        <path d="M1 7l3-2 6 1v13l-3 2-6-2z" />
        <path d="M7 8v13M1 7l6 1 3-2" strokeWidth="1" />
        <path d="M11 3l3-2 6 2v16l-6 2-3-2z" />
        <path d="M14 5v16M11 3l3 2 6-2" strokeWidth="1" />
      </svg>
      Part Studio 1
    </button>
    <button className="w-[218px] h-[30px] flex items-center gap-[5px] pl-[11px] bg-[#e8e8e8] text-[#666] rounded-b-md border-b border-[#c2c2c2]">
      <svg width="20" height="20" viewBox="0 0 20 20" fill="#fff" stroke="#333" strokeWidth="1.800" strokeLinejoin="round">
        <path d="M1 1h14l4 4v14H5l-4-4z" />
        <path d="M3 2h9l2 2v9H5l-2-2z" fill="#8b8b8b" stroke="#666" strokeWidth="1" />
        <path d="M3 2l2 2h9M5 4v9M14 4h4M5 13v5" fill="none" stroke="#666" strokeWidth="1" />
      </svg>
      Assembly 1
    </button>
  </footer>
);

const App = () => {
  return (
    <div className="h-screen flex flex-col overflow-hidden">
      <TopPanel />
      <div className="flex-1 min-h-0 flex">
        <Launcher />
        <div className="flex-1 min-w-0 flex flex-col bg-[#f4f3f1]">
          <TabStrip />
          <NavBar />
          <BookmarksBar />
          <main className="flex-1 min-h-0 flex flex-col bg-white font-['Roboto',sans-serif] text-[#333]">
            <DocumentHeader />
            <p className="h-[39px] shrink-0 flex items-center pt-[2px] pl-[10px] text-[15px] font-semibold">
              This document was shared via a link and is view only.
            </p>
            <div className="flex-1 min-h-0 flex">
              <FeaturePanel />
              <section className="relative flex-1 min-w-0 overflow-hidden">
                <ModelView />
                <div className="absolute top-0 right-0">
                  <ViewCube />
                </div>
              </section>
            </div>
            <DocumentTabs />
          </main>
        </div>
      </div>
    </div>
  );
};

export default App;
